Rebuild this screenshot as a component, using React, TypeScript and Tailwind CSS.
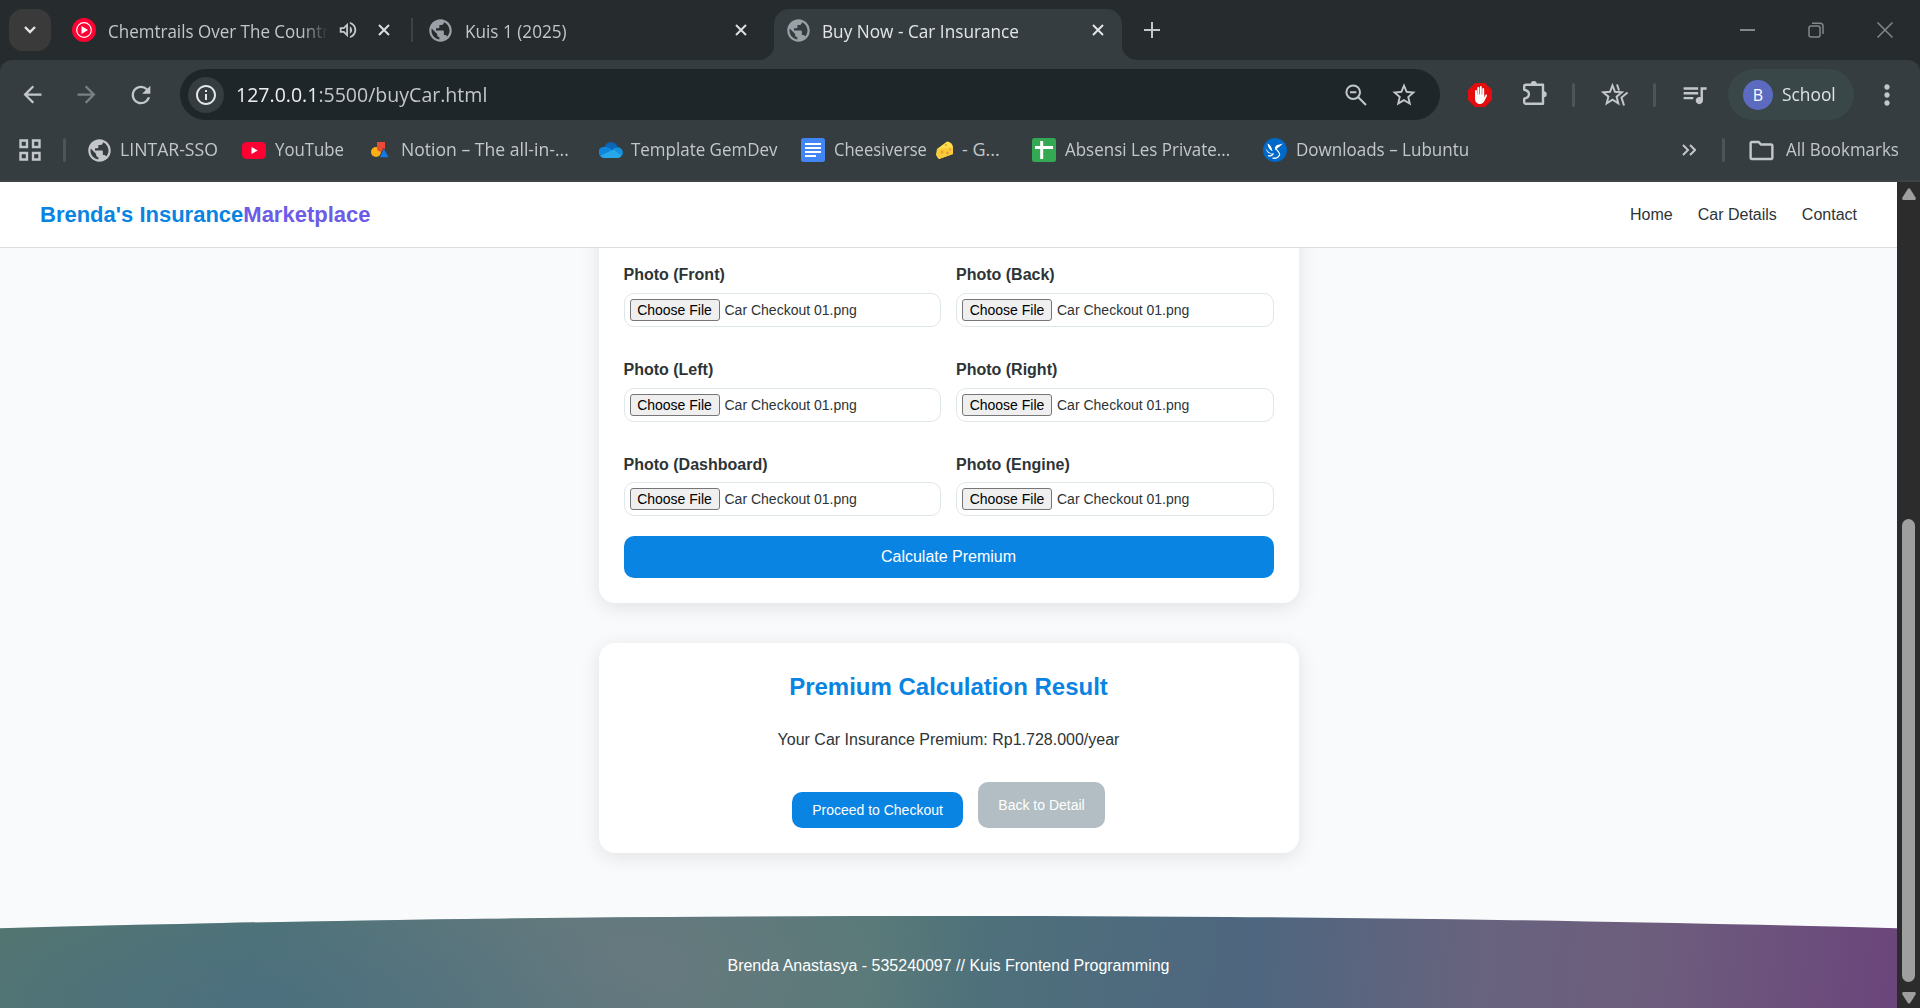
import { useLayoutEffect, useRef, useState, type ReactNode } from "react";
import {
  MdArrowBack,
  MdArrowForward,
  MdRefresh,
  MdInfoOutline,
  MdPublic,
  MdStarBorder,
  MdQueueMusic,
  MdMoreVert,
  MdOutlineFolder,
  MdOutlineVolumeUp,
} from "react-icons/md";

/* A label condensed horizontally to a fixed width. */
function Label({ w, className = "", children }: { w: number; className?: string; children: ReactNode }) {
  const ref = useRef<HTMLSpanElement>(null);
  const [scale, setScale] = useState(1);
  useLayoutEffect(() => {
    if (ref.current) setScale(w / ref.current.offsetWidth);
  }, [w]);
  return (
    <span className={`block shrink-0 whitespace-nowrap ${className}`} style={{ width: w }}>
      <span ref={ref} className="inline-block origin-left" style={{ transform: `scaleX(${scale})` }}>
        {children}
      </span>
    </span>
  );
}

const Cross = ({ className = "" }: { className?: string }) => (
  <svg viewBox="0 0 12 12" className={`h-3 w-3 shrink-0 ${className}`} stroke="currentColor" strokeWidth="2" fill="none">
    <path d="M1 1 11 11M11 1 1 11" />
  </svg>
);

const Divider = ({ className = "" }: { className?: string }) => (
  <div className={`h-6 w-[3px] shrink-0 rounded-full bg-[#4d5558] ${className}`} />
);

function TabStrip() {
  return (
    <div className="flex h-[60px] items-center bg-[#262b2e] text-[18px] text-[#c4c7c9]">
      <div className="ml-[9px] flex h-[42px] w-[42px] shrink-0 items-center justify-center rounded-[14px] bg-[#3a3a3a]">
        <svg viewBox="0 0 14 14" className="h-3.5 w-3.5" fill="none" stroke="#e6e6e6" strokeWidth="2.4">
          <path d="M2 4l5 5 5-5" />
        </svg>
      </div>
      <svg viewBox="0 0 24 24" className="ml-[21px] h-6 w-6 shrink-0">
        <circle cx="12" cy="12" r="12" fill="#ff0033" />
        <circle cx="12" cy="12" r="7.3" fill="none" stroke="#fff" strokeWidth="1.2" />
        <path d="M9.5 8l6.5 4-6.5 4z" fill="#fff" />
      </svg>
      <div className="ml-3 w-[220px] shrink-0 overflow-hidden pt-[2px] [mask-image:linear-gradient(to_right,black_88%,transparent)]">
        <Label w={221}>Chemtrails Over The Countr</Label>
      </div>
      <MdOutlineVolumeUp className="ml-[9px] h-[22px] w-[22px] shrink-0" />
      <Cross className="ml-[19px] text-[#dcdedf]" />
      <div className="ml-[21px] h-6 w-[2px] shrink-0 bg-[#3c4245]" />
      <MdPublic className="ml-[14px] h-[27px] w-[27px] shrink-0 text-[#9aa0a6]" />
      <Label w={102} className="ml-[11px] pt-[2px]">Kuis 1 (2025)</Label>
      <Cross className="ml-[168px] text-[#dcdedf]" />
      <svg viewBox="0 0 15 15" className="ml-[12px] h-[15px] w-[15px] shrink-0 self-end">
        <path d="M15 0v15H0A15 15 0 0 0 15 0Z" fill="#353d40" />
      </svg>
      <div className="flex h-[51px] w-[348px] shrink-0 items-center self-end rounded-t-[15px] bg-[#353d40] pb-[9px] text-[#e3e5e6]">
        <MdPublic className="ml-[11px] h-[27px] w-[27px] text-[#9aa0a6]" />
        <Label w={197} className="ml-[10px] pt-[2px]">Buy Now - Car Insurance</Label>
        <Cross className="ml-[73px]" />
      </div>
      <svg viewBox="0 0 15 15" className="h-[15px] w-[15px] shrink-0 self-end">
        <path d="M0 0v15h15A15 15 0 0 1 0 0Z" fill="#353d40" />
      </svg>
      <svg viewBox="0 0 16 16" className="ml-[7px] h-4 w-4" stroke="currentColor" strokeWidth="2">
        <path d="M8 0v16M0 8h16" />
      </svg>
      <div className="ml-auto flex items-center gap-[53px] pr-[27px] text-[#858889]">
        <div className="h-[2px] w-[15px] bg-current" />
        <svg viewBox="0 0 16 16" className="h-4 w-4" fill="none" stroke="currentColor" strokeWidth="1.5">
          <rect x="1" y="4" width="11" height="11" rx="2" />
          <path d="M4 1.2h8a3 3 0 0 1 3 3V12" />
        </svg>
        <svg viewBox="0 0 16 16" className="h-4 w-4" fill="none" stroke="currentColor" strokeWidth="1.5">
          <path d="M.5.5l15 15m0-15-15 15" />
        </svg>
      </div>
    </div>
  );
}

function Toolbar() {
  return (
    <div className="flex h-[51px] items-center text-[#c4c7c9]">
      <MdArrowBack className="ml-[19px] h-[27px] w-[27px] shrink-0" />
      <MdArrowForward className="ml-[27px] h-[27px] w-[27px] shrink-0 text-[#7b8183]" />
      <MdRefresh className="ml-[27px] h-[28px] w-[28px] shrink-0" />
      <div className="ml-[25px] flex h-[51px] w-[1260px] shrink-0 items-center rounded-full bg-[#1f2629]">
        <div className="ml-2 flex h-9 w-9 items-center justify-center rounded-full bg-[#353d40]">
          <MdInfoOutline className="h-6 w-6 text-[#e3e5e6]" />
        </div>
        <Label w={251} className="ml-3 text-[20px] text-[#c4c7c9]">
          <span className="text-[#eceeef]">127.0.0.1</span>:5500/buyCar.html
        </Label>
        <svg viewBox="0 0 22 22" className="ml-auto h-[22px] w-[22px]" fill="none" stroke="currentColor" strokeWidth="2">
          <circle cx="8.2" cy="8.2" r="6.8" />
          <path d="M13 13l8 8M5 8.2h6.4" />
        </svg>
        <MdStarBorder className="ml-[23px] mr-[22px] h-[28px] w-[28px]" />
      </div>
      <svg viewBox="0 0 24 24" className="ml-[28px] h-6 w-6 shrink-0">
        <path d="M7 0h10l7 7v10l-7 7H7l-7-7V7z" fill="#e40d0d" />
        <path
          d="M8 8v7M10.300 5V13M12.800 4V13M15.200 6V13"
          stroke="#fff"
          strokeWidth="1.9"
          strokeLinecap="round"
        />
        <path d="M7 11.500h9.200v3l1.300-2.600c.9-.9 1.800 0 1.400 1l-2.500 5.200C15.300 20.200 13.800 21 12 21 8.800 21 7 18.500 7 15.500z" fill="#fff" />
      </svg>
      <svg viewBox="0 0 26 26" className="ml-[30px] -mt-[3px] h-[26px] w-[26px] shrink-0" fill="none" stroke="currentColor" strokeWidth="2.400" strokeLinejoin="round">
        <path d="M3.500 4.700H21V23.800H3.500A1.500 1.500 0 0 1 2.200 22.300V18.700C8.500 17.500 8.500 11 2.200 9.800V6.200A1.500 1.500 0 0 1 3.500 4.700Z" />
        <path d="M8.800 4a3 3 0 0 1 6 0ZM21.700 11.200a3 3 0 0 1 0 6Z" fill="currentColor" stroke="none" />
      </svg>
      <Divider className="ml-[24px]" />
      <svg viewBox="0 0 28 26" className="ml-[26px] h-[26px] w-7 shrink-0" fill="none" stroke="currentColor" strokeWidth="2">
        <path d="M11.500 3.500L14 9.800 20.800 10.300 15.600 14.700 17.300 21.300 11.500 17.700 5.700 21.300 7.400 14.700 2.200 10.300 9 9.800Z" />
        <path d="M16 2.500L18 8.500M26.500 10.500L20.500 15.500 23 23.500" />
      </svg>
      <Divider className="ml-[24px]" />
      <MdQueueMusic className="ml-[24px] h-[29px] w-[29px] shrink-0" />
      <div className="ml-[19px] flex h-[51px] w-[126px] shrink-0 items-center rounded-full bg-[#394749]">
        <div className="ml-[15px] flex h-[30px] w-[30px] items-center justify-center rounded-full bg-[#5c6bc0] text-[16px] text-white">B</div>
        <Label w={54} className="ml-[9px] text-[18px] text-[#dfe3e4]">School</Label>
      </div>
      <MdMoreVert className="ml-[17px] h-[32px] w-[32px] shrink-0" />
    </div>
  );
}

function BookmarksBar() {
  return (
    <div className="flex h-[60px] items-center text-[18px] text-[#c4c7c9]">
      <svg viewBox="0 0 22 22" className="ml-[19px] h-[22px] w-[22px] shrink-0" fill="none" stroke="currentColor" strokeWidth="2.4">
        <path d="M1.500 1.500h6.500v6.500H1.500zM14 1.500h6.500v6.500H14zM1.500 14h6.500v6.500H1.500zM14 14h6.500v6.500H14z" />
      </svg>
      <Divider className="ml-[22px]" />
      <MdPublic className="ml-[20px] h-[27px] w-[27px] shrink-0" />
      <Label w={98} className="ml-[7px] pb-[2px]">LINTAR-SSO</Label>
      <svg viewBox="0 0 24 17" className="ml-[24px] h-[17px] w-6 shrink-0">
        <rect width="24" height="17" rx="4.500" fill="#ff0033" />
        <path d="M9.500 5l6.300 3.500-6.300 3.500z" fill="#fff" />
      </svg>
      <Label w={69} className="ml-[9px] pb-[2px]">YouTube</Label>
      <svg viewBox="0 0 18 16" className="ml-[27px] h-4 w-[18px] shrink-0">
        <circle cx="5" cy="10" r="5" fill="#fbb016" />
        <path d="M6 0h8v9.500H9Q6 9 6 6Z" fill="#ea4a36" />
        <path d="M12.700 6l5.300 9.500H8.500z" fill="#1479e8" stroke="#353d40" strokeWidth=".6" />
      </svg>
      <Label w={168} className="ml-[12px] pb-[2px]">Notion – The all-in-...</Label>
      <svg viewBox="0 0 24 16" className="ml-[30px] h-4 w-6 shrink-0">
        <path d="M5.500 5A7 7 0 0 1 18.500 4.500L14 9 3 12z" fill="#0a66b8" />
        <path d="M4.800 5C9 4.500 11 6.500 14 8.500L6 15 1.500 14A5 5 0 0 1 4.800 5Z" fill="#0f86dc" />
        <path d="M18 5.200a5.400 5.400 0 0 1 3.500 9.800L13 10.500 14.500 6.500Z" fill="#1490df" />
        <path d="M14.500 7.500L22.500 13.800Q21.300 16 18.700 16H5Q2.500 16 1.200 13.800Z" fill="#28a8ea" />
      </svg>
      <Label w={146} className="ml-[8px] pb-[2px]">Template GemDev</Label>
      <svg viewBox="0 0 24 24" className="ml-[24px] h-6 w-6 shrink-0">
        <rect width="24" height="24" rx="2.500" fill="#4285f4" />
        <path d="M4 6h16M4 10h16M4 14h16M4 18h11" stroke="#fff" strokeWidth="2.200" />
      </svg>
      <Label w={93} className="ml-[9px] pb-[2px]">Cheesiverse</Label>
      <svg viewBox="0 0 18 18" className="ml-[9px] h-[18px] w-[18px] shrink-0">
        <path d="M1 8L11 .5Q16 1 17 6L17 13 3 18 0 14Z" fill="#ffe04a" />
        <path d="M1 8L17 6V13L3 18 1 16Z" fill="#fbcb3c" />
        <g fill="#e0a02a">
          <circle cx="6" cy="11" r="1.500" />
          <circle cx="11.500" cy="12" r="1.400" />
          <circle cx="14" cy="8.500" r="1" />
          <circle cx="10" cy="4" r="1.100" />
        </g>
      </svg>
      <Label w={38} className="ml-[8px] pb-[2px]">- G...</Label>
      <svg viewBox="0 0 24 24" className="ml-[32px] h-6 w-6 shrink-0">
        <rect width="24" height="24" rx="2.500" fill="#34a853" />
        <path d="M3 9.500h18M9.700 3v18" stroke="#fff" strokeWidth="3" />
      </svg>
      <Label w={165} className="ml-[9px] pb-[2px]">Absensi Les Private...</Label>
      <svg viewBox="0 0 24 24" className="ml-[33px] h-6 w-6 shrink-0">
        <circle cx="12" cy="12" r="12" fill="#0068c8" />
        <path d="M4.500 5.500C7 6.500 8.500 9 9.500 13 6.500 12 4.800 9 4.500 5.500ZM2.500 9.500C4 13 6 15 9.500 15.500 6 16.500 3.500 14.500 2.500 9.500ZM12 12C11.500 8.500 13.500 7 15.500 6.800L20 5.600 17 8.200Z" fill="#fff" />
        <path d="M12.500 9C12 12 17.500 13.500 16.500 17 15.500 19.500 12.500 20.500 9.500 20.200M5 17.500C7 18.500 9 17.500 10.500 15.500" fill="none" stroke="#fff" strokeWidth="1.300" />
      </svg>
      <Label w={173} className="ml-[9px] pb-[2px]">Downloads – Lubuntu</Label>
      <svg viewBox="0 0 14 12" className="ml-auto h-3 w-3.5 shrink-0" fill="none" stroke="currentColor" strokeWidth="2">
        <path d="M1 1l5 5-5 5M8 1l5 5-5 5" />
      </svg>
      <Divider className="ml-[26px]" />
      <MdOutlineFolder className="ml-[22px] h-[29px] w-[29px] shrink-0" />
      <Label w={113} className="ml-[10px] mr-[21px] pb-[2px]">All Bookmarks</Label>
    </div>
  );
}

function FileField({ label }: { label: string }) {
  return (
    <div className="group flex flex-col">
      <span className="h-[19px] text-[16px] leading-[19px] font-bold">{label}</span>
      <div className="mt-[9px] flex h-[34px] items-center rounded-[10px] border border-[#dfe6e9] bg-white pl-[5px] text-[14px] group-nth-[n+5]:mt-[8px]">
        <button className="flex h-[22px] w-[90px] items-center justify-center rounded-[3px] border border-[#767676] bg-[#efefef] text-black">
          Choose File
        </button>
        <span className="ml-[5px]">Car Checkout 01.png</span>
      </div>
    </div>
  );
}

const photos = ["Front", "Back", "Left", "Right", "Dashboard", "Engine"];

function Page() {
  return (
    <div className="flex w-[1897px] shrink-0 flex-col overflow-hidden bg-[#f9fafc] font-['Liberation_Sans',Arial,sans-serif] text-[16px] text-[#2d3436]">
      <header className="z-10 flex h-[66px] shrink-0 items-center justify-between border-b border-[#dddddd] bg-white px-[40px]">
        <h1 className="text-[22px] font-bold text-[#0984e3]">
          Brenda's Insurance<span className="text-[#6c5ce7]">Marketplace</span>
        </h1>
        <nav className="flex gap-[25px]">
          <a>Home</a>
          <a>Car Details</a>
          <a>Contact</a>
        </nav>
      </header>
      <main className="flex flex-1 flex-col items-center gap-[40px]">
        <section className="-mt-[40px] w-[700px] rounded-b-[16px] bg-white px-[25px] pt-[57px] pb-[25px] shadow-[0_4px_20px_rgba(0,0,0,0.1)]">
          <div className="grid grid-cols-2 gap-x-[15px] gap-y-[33px]">
            {photos.map((p) => (
              <FileField key={p} label={`Photo (${p})`} />
            ))}
          </div>
          <button className="mt-[20px] h-[42px] w-full rounded-[10px] bg-[#0984e3] text-white">Calculate Premium</button>
        </section>
        <section className="flex h-[210px] w-[700px] flex-col items-center rounded-[16px] bg-white pt-[30px] shadow-[0_4px_20px_rgba(0,0,0,0.1)]">
          <h2 className="text-[24px] leading-[28px] font-bold text-[#0984e3]">Premium Calculation Result</h2>
          <p className="mt-[29px] leading-[19px]">Your Car Insurance Premium: Rp1.728.000/year</p>
          <div className="mt-[33px] flex items-end gap-[15px] text-[14px] text-white">
            <button className="h-[36px] w-[171px] rounded-[10px] bg-[#0984e3]">Proceed to Checkout</button>
            <button className="h-[46px] w-[127px] rounded-[10px] bg-[#b2bec3]">Back to Detail</button>
          </div>
        </section>
      </main>
      <footer className="flex h-[92px] shrink-0 items-center justify-center bg-[radial-gradient(ellipse_420px_110px_at_260px_90%,#4c6f80cc,transparent),radial-gradient(ellipse_350px_160px_at_600px_60%,#6b7a80cc,transparent),linear-gradient(97deg,#54766f_0%,#4e7378_15%,#5c787a_35%,#577a78_46%,#4e707b_52%,#4e667f_66%,#68637e_78%,#6d5d7d_87%,#6b457b_100%)] pt-[8px] text-white [clip-path:ellipse(100%_100%_at_50%_100%)]">
        Brenda Anastasya - 535240097 // Kuis Frontend Programming
      </footer>
    </div>
  );
}

function Scrollbar() {
  return (
    <div className="flex flex-1 flex-col items-center bg-[#2c2c2c] pt-[6px]">
      <svg viewBox="0 0 14 12" className="h-3 w-3.5" fill="#9f9f9f">
        <path d="M5.500 1.500Q7-.8 8.500 1.500L13.600 9.500Q14.200 12 12.500 12H1.500Q-.2 12 .4 9.500Z" />
      </svg>
      <div className="mt-[319px] h-[463px] w-[13px] rounded-full bg-[#9f9f9f]" />
      <svg viewBox="0 0 14 12" className="mt-[10px] h-3 w-3.5 rotate-180" fill="#9f9f9f">
        <path d="M5.500 1.500Q7-.8 8.500 1.500L13.600 9.500Q14.200 12 12.500 12H1.500Q-.2 12 .4 9.500Z" />
      </svg>
    </div>
  );
}

export default function App() {
  return (
    <div className="flex h-[1008px] w-[1920px] flex-col overflow-hidden bg-white font-['Open_Sans','Noto_Sans',sans-serif]">
      <TabStrip />
      <div className="bg-[#262b2e]">
        <div className="flex h-[122px] flex-col rounded-t-[12px] border-b-2 border-[#3f4444] bg-[#353d40] pt-[9px]">
          <Toolbar />
          <BookmarksBar />
        </div>
      </div>
      <div className="flex min-h-0 flex-1">
        <Page />
        <Scrollbar />
      </div>
    </div>
  );
}
